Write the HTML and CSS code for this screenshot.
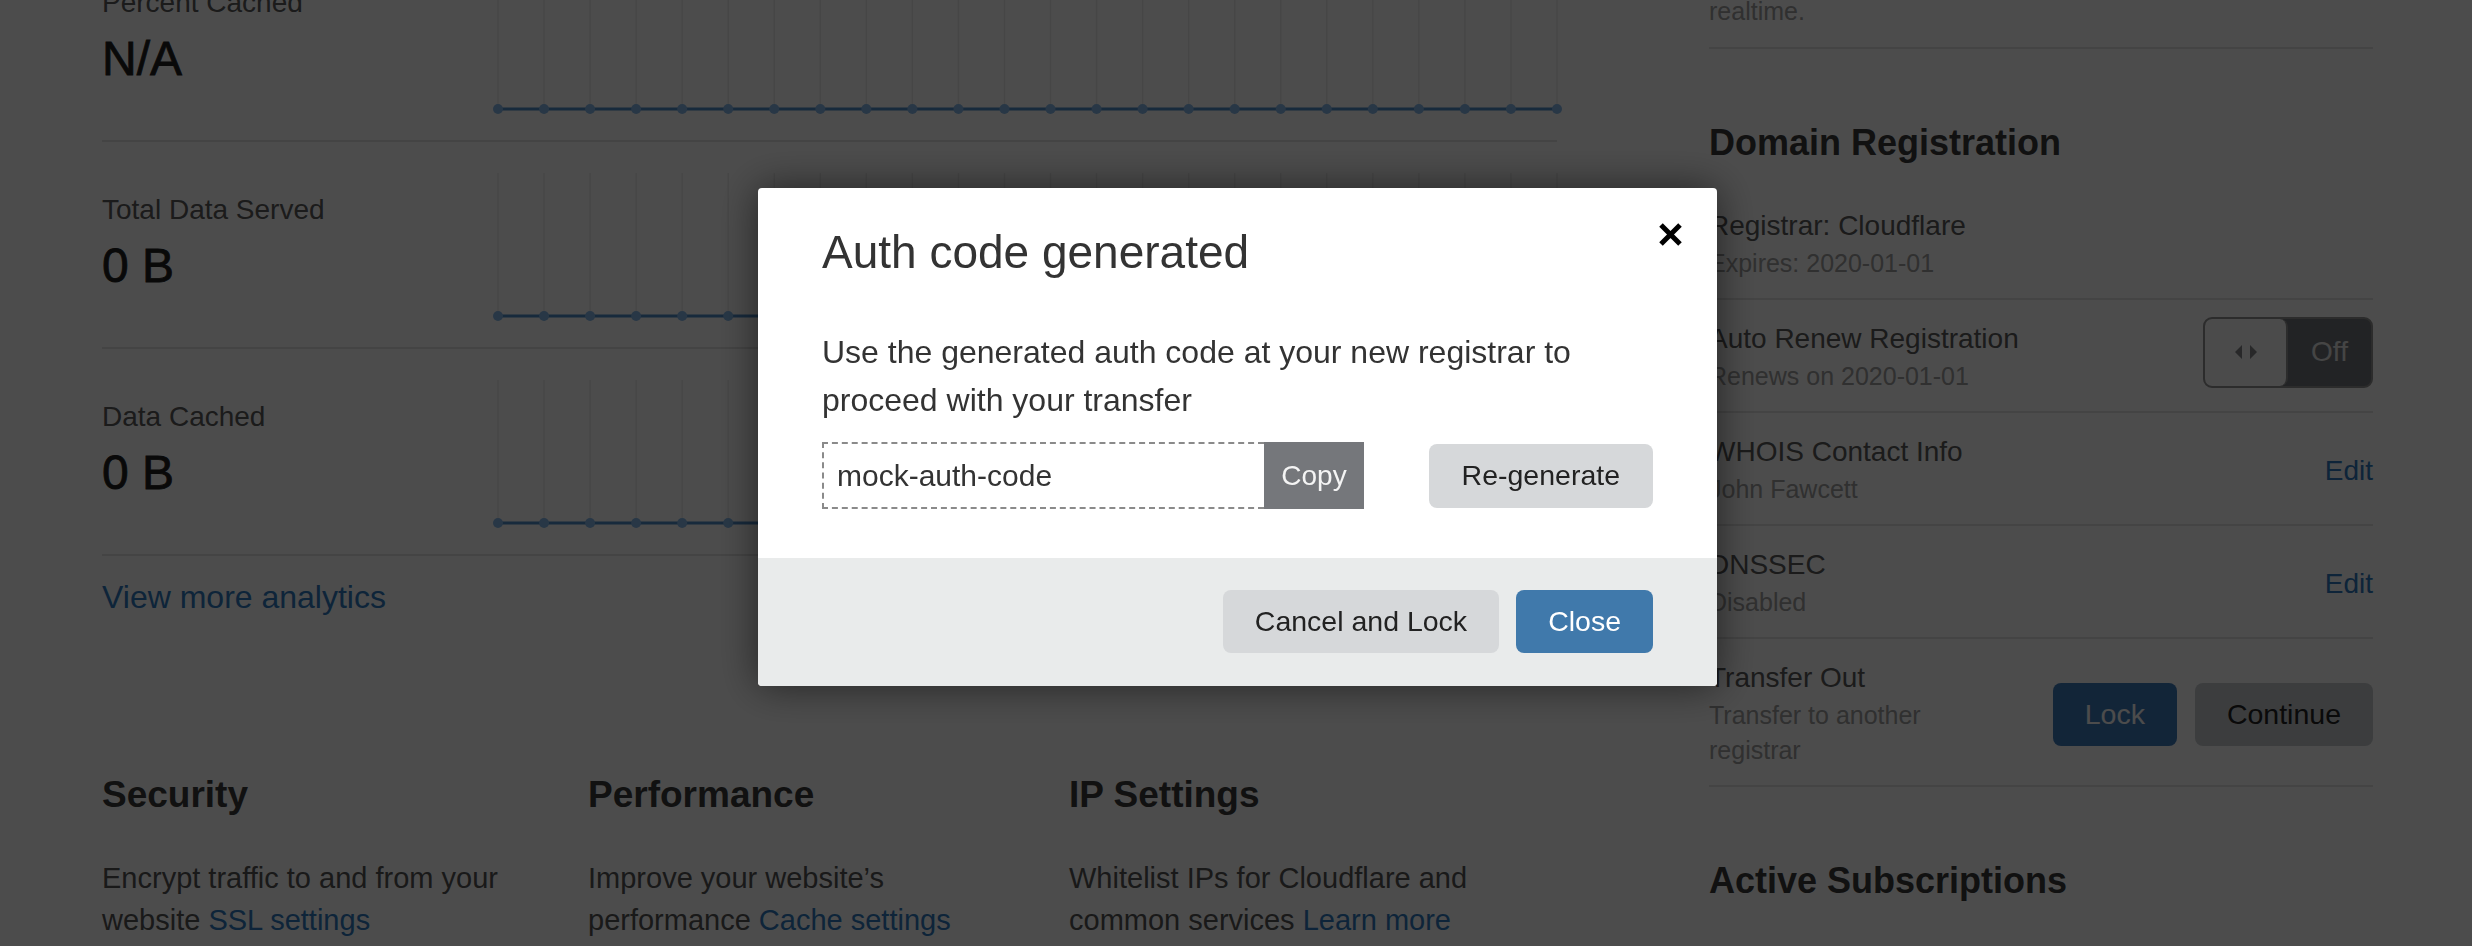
FILE: index.html
```html
<!DOCTYPE html>
<html lang="en">
<head>
<meta charset="utf-8">
<title>Overview</title>
<link rel="stylesheet" href="styles.css">
</head>
<body>
<div class="page">
  <main class="main-col">
    <section class="analytics">
      <div class="stat-row">
        <div class="stat-info">
          <div class="stat-label">Percent Cached</div>
          <div class="stat-value">N/A</div>
        </div>
        <svg class="chart" width="1059" height="205" viewBox="0 0 1059 205">
          <defs>
            <g id="chart-series">
              <path fill="none" stroke="#ececec" stroke-width="1.5" d="M0 31V174M46.04 31V174M92.09 31V174M138.13 31V174M184.17 31V174M230.22 31V174M276.26 31V174M322.3 31V174M368.35 31V174M414.39 31V174M460.43 31V174M506.48 31V174M552.52 31V174M598.57 31V174M644.61 31V174M690.65 31V174M736.7 31V174M782.74 31V174M828.78 31V174M874.83 31V174M920.87 31V174M966.91 31V174M1012.96 31V174M1059 31V174"/>
              <line x1="0" y1="174" x2="1059" y2="174" stroke="#4f8cc9" stroke-width="3"/>
              <g fill="#86b9ea">
                <circle cx="0" cy="174" r="5"/><circle cx="46.04" cy="174" r="5"/><circle cx="92.09" cy="174" r="5"/><circle cx="138.13" cy="174" r="5"/>
                <circle cx="184.17" cy="174" r="5"/><circle cx="230.22" cy="174" r="5"/><circle cx="276.26" cy="174" r="5"/><circle cx="322.3" cy="174" r="5"/>
                <circle cx="368.35" cy="174" r="5"/><circle cx="414.39" cy="174" r="5"/><circle cx="460.43" cy="174" r="5"/><circle cx="506.48" cy="174" r="5"/>
                <circle cx="552.52" cy="174" r="5"/><circle cx="598.57" cy="174" r="5"/><circle cx="644.61" cy="174" r="5"/><circle cx="690.65" cy="174" r="5"/>
                <circle cx="736.7" cy="174" r="5"/><circle cx="782.74" cy="174" r="5"/><circle cx="828.78" cy="174" r="5"/><circle cx="874.83" cy="174" r="5"/>
                <circle cx="920.87" cy="174" r="5"/><circle cx="966.91" cy="174" r="5"/><circle cx="1012.96" cy="174" r="5"/><circle cx="1059" cy="174" r="5"/>
              </g>
            </g>
          </defs>
          <use href="#chart-series"/>
        </svg>
      </div>
      <div class="stat-row">
        <div class="stat-info">
          <div class="stat-label">Total Data Served</div>
          <div class="stat-value">0 B</div>
        </div>
        <svg class="chart" width="1059" height="205" viewBox="0 0 1059 205"><use href="#chart-series"/></svg>
      </div>
      <div class="stat-row">
        <div class="stat-info">
          <div class="stat-label">Data Cached</div>
          <div class="stat-value">0 B</div>
        </div>
        <svg class="chart" width="1059" height="205" viewBox="0 0 1059 205"><use href="#chart-series"/></svg>
      </div>
      <a class="more-link" href="#">View more analytics</a>
    </section>

    <section class="features">
      <div class="feature">
        <h2 class="feature-title">Security</h2>
        <p class="feature-text">Encrypt traffic to and from your website <a href="#">SSL settings</a></p>
      </div>
      <div class="feature">
        <h2 class="feature-title">Performance</h2>
        <p class="feature-text">Improve your website’s performance <a href="#">Cache settings</a></p>
      </div>
      <div class="feature">
        <h2 class="feature-title">IP Settings</h2>
        <p class="feature-text">Whitelist IPs for Cloudflare and common services <a href="#">Learn more</a></p>
      </div>
    </section>
  </main>

  <aside class="side-col">
    <div class="side-intro">
      <p>Analytics for your domain are updated in<br>realtime.</p>
    </div>

    <h2 class="side-title">Domain Registration</h2>
    <div class="reg-list">
      <div class="reg-row">
        <div class="reg-info">
          <div class="reg-label">Registrar: Cloudflare</div>
          <div class="reg-sub">Expires: 2020-01-01</div>
        </div>
      </div>
      <div class="reg-row">
        <div class="reg-info">
          <div class="reg-label">Auto Renew Registration</div>
          <div class="reg-sub">Renews on 2020-01-01</div>
        </div>
        <div class="toggle">
          <div class="toggle-knob">
            <svg width="24" height="16" viewBox="0 0 24 16"><path d="M8 1L1 8l7 7z M16 1l7 7-7 7z" fill="#85878a"/></svg>
          </div>
          <div class="toggle-text">Off</div>
        </div>
      </div>
      <div class="reg-row">
        <div class="reg-info">
          <div class="reg-label">WHOIS Contact Info</div>
          <div class="reg-sub">John Fawcett</div>
        </div>
        <a class="edit-link" href="#">Edit</a>
      </div>
      <div class="reg-row">
        <div class="reg-info">
          <div class="reg-label">DNSSEC</div>
          <div class="reg-sub">Disabled</div>
        </div>
        <a class="edit-link" href="#">Edit</a>
      </div>
      <div class="reg-row">
        <div class="reg-info reg-info-narrow">
          <div class="reg-label">Transfer Out</div>
          <div class="reg-sub">Transfer to another registrar</div>
        </div>
        <div class="btn-group">
          <button class="btn btn-lock">Lock</button>
          <button class="btn btn-secondary btn-dim">Continue</button>
        </div>
      </div>
    </div>

    <h2 class="side-title">Active Subscriptions</h2>
  </aside>
</div>

<div class="overlay"></div>

<div class="modal" role="dialog">
  <div class="modal-body">
    <h1 class="modal-title">Auth code generated</h1>
    <button class="modal-close" aria-label="Close">
      <svg width="23" height="23" viewBox="0 0 23 23"><path d="M2 2L21 21M21 2L2 21" stroke="#000" stroke-width="5"/></svg>
    </button>
    <p class="modal-text">Use the generated auth code at your new registrar to proceed with your transfer</p>
    <div class="code-row">
      <div class="code-group">
        <input class="code-input" type="text" value="mock-auth-code" readonly>
        <button class="copy-btn">Copy</button>
      </div>
      <button class="btn btn-secondary btn-regen">Re-generate</button>
    </div>
  </div>
  <div class="modal-footer">
    <button class="btn btn-secondary">Cancel and Lock</button>
    <button class="btn btn-primary">Close</button>
  </div>
</div>
</body>
</html>
```

FILE: styles.css
```css
* { box-sizing: border-box; }

html, body { margin: 0; padding: 0; }

body {
  width: 2472px;
  height: 946px;
  overflow: hidden;
  background: #ffffff;
  font-family: "Liberation Sans", Arial, sans-serif;
  color: #333333;
}

.page {
  display: flex;
  gap: 152px;
  padding: 0 99px 0 102px;
  margin-top: -65px;
}

.main-col { width: 1455px; flex: none; }
.side-col { width: 664px; flex: none; }

/* Analytics rows */
.stat-row {
  display: flex;
  height: 207px;
  border-bottom: 2px solid #e3e3e3;
}
.stat-info { flex: 1; padding-top: 51px; }
.stat-label { font-size: 28px; line-height: 34px; color: #5a5a5a; }
.stat-value {
  margin-top: 11px;
  font-size: 48px;
  line-height: 56px;
  color: #1e1e1e;
  -webkit-text-stroke: 0.8px #1e1e1e;
}
.chart { flex: none; overflow: visible; display: block; }

.more-link {
  display: block;
  margin-top: 21px;
  font-size: 32px;
  line-height: 40px;
  color: #2f7bbf;
  text-decoration: none;
}

/* Feature columns */
.features {
  display: grid;
  grid-template-columns: 486px 481px 1fr;
  margin-top: 156px;
}
.feature-title {
  margin: 0;
  font-size: 37px;
  line-height: 44px;
  font-weight: 700;
  color: #3a3a3a;
}
.feature-text {
  margin: 40px 0 0;
  max-width: 440px;
  font-size: 29px;
  line-height: 42px;
  color: #555555;
}
.feature-text a { color: #2f7bbf; text-decoration: none; }

/* Side column */
.side-intro {
  padding: 24px 0 18px;
  border-bottom: 2px solid #e3e3e3;
  font-size: 25px;
  line-height: 35px;
  color: #a0a0a0;
}
.side-intro p { margin: 0; }

.side-title {
  margin: 72px 0 22px;
  font-size: 36px;
  line-height: 44px;
  font-weight: 700;
  color: #3a3a3a;
}

.reg-row {
  display: flex;
  align-items: center;
  justify-content: space-between;
  gap: 16px;
  padding: 22px 0 17.5px;
  border-bottom: 2px solid #e3e3e3;
}
.reg-info-narrow { max-width: 260px; }
.reg-label { font-size: 28px; line-height: 34px; color: #5a5a5a; }
.reg-sub { margin-top: 2.5px; font-size: 25px; line-height: 35px; color: #a0a0a0; }

.edit-link { font-size: 28px; line-height: 34px; color: #2f7bbf; text-decoration: none; }

.toggle {
  display: flex;
  width: 170px;
  height: 71px;
  margin-top: -11px;
  border: 2px solid #949494;
  border-radius: 9px;
  background: #74777c;
  overflow: hidden;
}
.toggle-knob {
  width: 83px;
  display: flex;
  align-items: center;
  justify-content: center;
  background: #fafafa;
  border-right: 2px solid #949494;
  border-radius: 0 8px 8px 0;
}
.toggle-text {
  flex: 1;
  display: flex;
  align-items: center;
  justify-content: center;
  font-size: 28px;
  color: #e8e8e8;
}

/* Buttons */
.btn-group { display: flex; gap: 18px; }
.btn {
  height: 63px;
  padding: 0 32px;
  border: none;
  border-radius: 8px;
  font-family: inherit;
  font-size: 28.5px;
  cursor: pointer;
}
.btn-primary { background: #4079ab; color: #ffffff; }
.btn-lock { background: #3f7dbd; color: #ffffff; }
.btn-secondary { background: #d6d8da; color: #222222; }
.btn-dim { background: #c9cdd0; }
.btn-regen { height: 64px; padding: 0 33px; }

/* Overlay + modal */
.overlay {
  position: fixed;
  inset: 0;
  background: rgba(0, 0, 0, 0.7);
}

.modal {
  position: fixed;
  left: 758px;
  top: 188px;
  width: 959px;
  background: #ffffff;
  border-radius: 4px;
  overflow: hidden;
  box-shadow: 0 0 40px rgba(0, 0, 0, 0.55);
}
.modal-body { padding: 36px 64px 49px; }
.modal-title {
  margin: 0;
  font-size: 46px;
  line-height: 56px;
  font-weight: 400;
  color: #333333;
}
.modal-close {
  position: absolute;
  top: 35px;
  left: 901px;
  width: 23px;
  height: 23px;
  padding: 0;
  border: none;
  background: none;
  display: block;
}
.modal-close svg { display: block; }
.modal-text {
  margin: 48px 0 18px;
  font-size: 32px;
  line-height: 48px;
  color: #333333;
}
.code-row {
  display: flex;
  align-items: center;
  justify-content: space-between;
}
.code-group { display: flex; height: 67px; }
.code-input {
  width: 442px;
  height: 67px;
  margin: 0;
  padding: 0 0 0 13px;
  border: 2px dashed #8a8a8a;
  border-right: none;
  border-radius: 0;
  outline: none;
  font-family: inherit;
  font-size: 30px;
  color: #333333;
  background: #ffffff;
}
.copy-btn {
  width: 100px;
  height: 67px;
  border: none;
  border-radius: 0;
  background: #75777b;
  color: #f4f4f4;
  font-family: inherit;
  font-size: 28px;
}
.modal-footer {
  display: flex;
  justify-content: flex-end;
  gap: 17px;
  padding: 32px 64px 33px;
  background: #e9ebeb;
}
```
